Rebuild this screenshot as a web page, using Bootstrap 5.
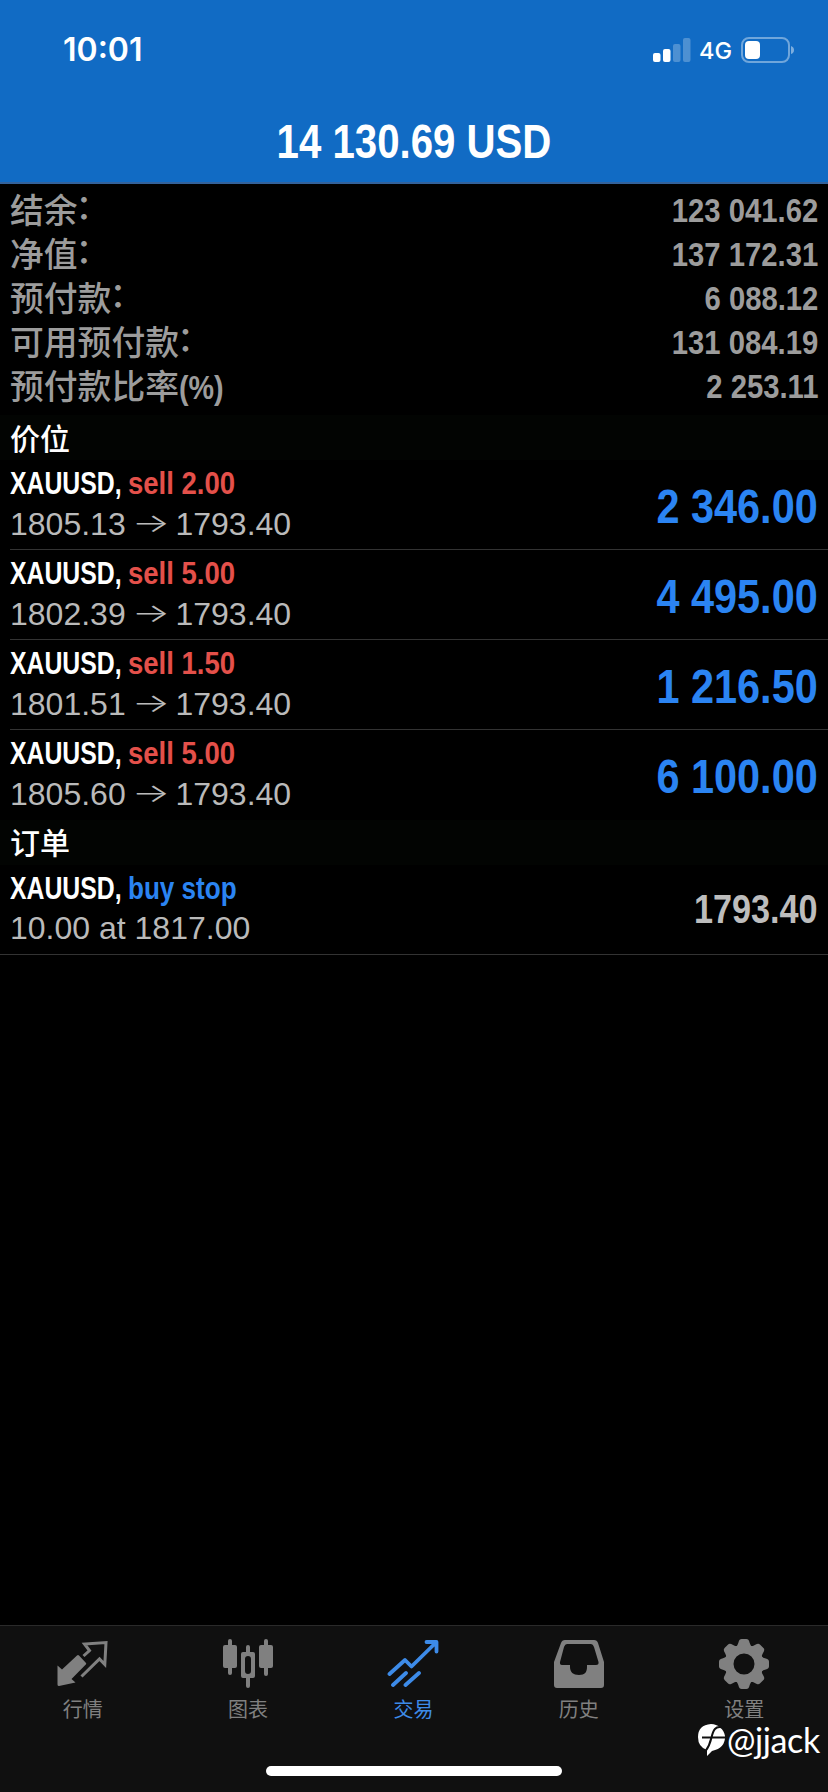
<!DOCTYPE html>
<html lang="zh-CN">
<head>
<meta charset="utf-8">
<meta name="viewport" content="width=device-width, initial-scale=1">
<title>14 130.69 USD</title>
<link rel="stylesheet" href="https://cdn.jsdelivr.net/npm/bootstrap@5.3.0/dist/css/bootstrap.min.css">
<style>
  body { background: #000; color: #fff; font-family: "Liberation Sans", "Noto Sans CJK SC", sans-serif; }
  .phone { height: 1792px; overflow: hidden; }
  /* condensed bold face: regular-width bold, squeezed horizontally */
  .narrow { display: inline-block; font-family: "Liberation Sans", sans-serif; font-weight: 700; white-space: nowrap; transform: scaleX(var(--sx, .85)); transform-origin: right center; }
  .narrow.from-start { transform-origin: left center; }
  .top-area { height: 184px; background: #116bc4; border-bottom: 2px solid #33629b; }
  .status { height: 100px; padding: 0 33px 0 63px; }
  .clock { font: 600 32px/36px Inter, sans-serif; letter-spacing: 0; }
  .net { font: 500 23.500px/28px Inter, sans-serif; margin: 1px 9px 0 8px; }
  .total { --sx: .82; display: block; font-size: 49px; line-height: 82px; transform-origin: center; }
  .summary { height: 231px; padding: 4px 10px 0; color: #9c9c9c; }
  .sum-row { height: 44px; font-size: 34px; line-height: 44px; }
  .sum-key { font: 500 33.800px/44px "Noto Sans CJK SC", sans-serif; margin-top: -1px; }
  .colon { display: inline-block; height: 44px; line-height: 44px; vertical-align: top; margin: -4px 0 0 -2px; }
  .sum-val { --sx: .86; }
  .group-title { height: 45px; padding-left: 10px; background: #020402; font: 500 30px/44px "Noto Sans CJK SC", sans-serif; }
  .group-title.second { line-height: 42px; }
  .deal { height: 90px; margin-left: 10px; padding: 2px 10px 0 0; border-bottom: 1px solid #333; }
  .deal.full { margin-left: 0; padding-left: 10px; }
  .deal-name { height: 41px; font-size: 32px; line-height: 42px; }
  .deal-name .narrow { vertical-align: top; }
  .symbol { --sx: .775; width: 118px; }
  .deal-line { font-size: 32px; line-height: 42px; color: #bababa; white-space: nowrap; }
  .full .deal-line { line-height: 41px; }
  .arrow { display: inline-flex; width: 32px; height: 30px; line-height: 30px; vertical-align: top; margin-top: 5px; justify-content: center; font-family: Inter, sans-serif; font-weight: 300; font-size: 26px; transform: scaleX(1.55); }
  .sell { --sx: .86; color: #e4504a; }
  .buy { --sx: .815; color: #2b84f2; }
  .profit { --sx: .846; font-size: 49px; line-height: 50px; color: #2b84f2; margin-top: 19px; }
  .quote { --sx: .855; font-size: 40px; line-height: 46px; color: #bdbdbd; margin-top: 19px; }
  .tabs { height: 167px; background: #101010; border-top: 1px solid #2a2a2a; padding-right: 1px; }
  .tab { width: 20%; padding-top: 12px; color: #808080; font: 400 20px/28px "Noto Sans CJK SC", sans-serif; }
  .tab svg { width: 52px; height: 52px; margin-bottom: 5px; }
  .tab.on { color: #3d8be8; }
  .home-bar { width: 296px; height: 10px; bottom: 16px; left: 266px; background: #fff; border-radius: 5px; }
  .stamp { left: 697px; bottom: 32px; font: 400 34px/40px Lato, sans-serif; letter-spacing: -.4px; }
</style>
</head>
<body>
<div class="phone d-flex flex-column position-relative">
  <header class="top-area flex-shrink-0">
    <div class="status d-flex justify-content-between align-items-center">
      <span class="clock">10:01</span>
      <div class="d-flex align-items-center">
        <svg width="38" height="24" viewBox="0 0 38 24" fill="#fff"><rect y="15" width="7.500" height="9" rx="2"/><rect x="10" y="11" width="7.500" height="13" rx="2"/><g opacity=".25"><rect x="20" y="6" width="7.500" height="18" rx="2"/><rect x="30" y="0" width="7.500" height="24" rx="2"/></g></svg>
        <span class="net">4G</span>
        <svg width="54" height="26" viewBox="0 0 54 26"><rect x="1" y="1" width="47" height="24" rx="7" fill="none" stroke="#fff" stroke-opacity=".4" stroke-width="2"/><rect x="4" y="4" width="15" height="18" rx="4" fill="#fff"/><path d="M50 9q3 1 3 4t-3 4z" fill="#fff" fill-opacity=".45"/></svg>
      </div>
    </div>
    <div class="total narrow text-center">14 130.69 USD</div>
  </header>

  <main class="flex-grow-1">
    <section class="summary">
      <div class="sum-row d-flex justify-content-between"><span class="sum-key">结余<span class="colon">：</span></span><span class="sum-val narrow">123 041.62</span></div>
      <div class="sum-row d-flex justify-content-between"><span class="sum-key">净值<span class="colon">：</span></span><span class="sum-val narrow">137 172.31</span></div>
      <div class="sum-row d-flex justify-content-between"><span class="sum-key">预付款<span class="colon">：</span></span><span class="sum-val narrow">6 088.12</span></div>
      <div class="sum-row d-flex justify-content-between"><span class="sum-key">可用预付款<span class="colon">：</span></span><span class="sum-val narrow">131 084.19</span></div>
      <div class="sum-row d-flex justify-content-between"><span class="sum-key">预付款比率<span class="narrow from-start">(%)</span></span><span class="sum-val narrow">2 253.11</span></div>
    </section>

    <div class="group-title">价位</div>
    <div class="deal d-flex justify-content-between align-items-start">
      <div><div class="deal-name"><span class="symbol narrow from-start">XAUUSD,</span><span class="sell narrow from-start">sell 2.00</span></div><div class="deal-line">1805.13 <span class="arrow">→</span> 1793.40</div></div>
      <div class="profit narrow">2 346.00</div>
    </div>
    <div class="deal d-flex justify-content-between align-items-start">
      <div><div class="deal-name"><span class="symbol narrow from-start">XAUUSD,</span><span class="sell narrow from-start">sell 5.00</span></div><div class="deal-line">1802.39 <span class="arrow">→</span> 1793.40</div></div>
      <div class="profit narrow">4 495.00</div>
    </div>
    <div class="deal d-flex justify-content-between align-items-start">
      <div><div class="deal-name"><span class="symbol narrow from-start">XAUUSD,</span><span class="sell narrow from-start">sell 1.50</span></div><div class="deal-line">1801.51 <span class="arrow">→</span> 1793.40</div></div>
      <div class="profit narrow">1 216.50</div>
    </div>
    <div class="deal border-bottom-0 d-flex justify-content-between align-items-start">
      <div><div class="deal-name"><span class="symbol narrow from-start">XAUUSD,</span><span class="sell narrow from-start">sell 5.00</span></div><div class="deal-line">1805.60 <span class="arrow">→</span> 1793.40</div></div>
      <div class="profit narrow">6 100.00</div>
    </div>

    <div class="group-title second">订单</div>
    <div class="deal full d-flex justify-content-between align-items-start">
      <div><div class="deal-name"><span class="symbol narrow from-start">XAUUSD,</span><span class="buy narrow from-start">buy stop</span></div><div class="deal-line">10.00 at 1817.00</div></div>
      <div class="quote narrow">1793.40</div>
    </div>
  </main>

  <nav class="tabs d-flex flex-shrink-0 text-center">
    <div class="tab d-flex flex-column align-items-center">
      <svg viewBox="0 0 52 52"><path d="M.5 27.500 5 31.500 20 17.500q1-1 2 0l7 7.500q.6.8-.2 1.600L14.500 41l4 3.500L2 48Q.5 48 .5 46.500z" fill="currentColor"/><path d="M26.500 18 32.500 12.500 27.500 6 49 4.500 47.800 26.500 42.500 21 24.500 38.500" fill="none" stroke="currentColor" stroke-width="3"/></svg>
      行情
    </div>
    <div class="tab d-flex flex-column align-items-center">
      <svg viewBox="0 0 52 52" fill="currentColor"><rect x="6" y="1" width="4" height="36" rx="2"/><rect x="1" y="7" width="14" height="23" rx="2"/><rect x="42" y="1" width="4" height="37" rx="2"/><rect x="37" y="7" width="14" height="23" rx="2"/><path fill-rule="evenodd" d="M24 9a2 2 0 0 1 4 0v5h3a2 2 0 0 1 2 2v22a2 2 0 0 1-2 2h-3v8a2 2 0 0 1-4 0v-8h-3a2 2 0 0 1-2-2V16a2 2 0 0 1 2-2h3zM26 18q-3 0-3 3v12q0 3 3 3t3-3V21q0-3-3-3z"/></svg>
      图表
    </div>
    <div class="tab on d-flex flex-column align-items-center">
      <svg viewBox="0 0 52 52" fill="none" stroke="currentColor" stroke-width="3.800" stroke-linecap="round" stroke-linejoin="round"><path d="M2.500 36 18 22 24.500 28.500 49 4.500M39.500 4H49.500V13.500M6 47 19 35M18.500 47 32 35"/></svg>
      交易
    </div>
    <div class="tab d-flex flex-column align-items-center">
      <svg viewBox="0 0 52 52"><path fill="currentColor" fill-rule="evenodd" d="M12 2h29q3 0 4 3l6 19v23q0 3-3 3H4q-3 0-3-3V24L8 5q1-3 4-3zM14 6q-2 0-3 3L7 24q-.5 3 2 3h8v2c0 5 3 8 9 8s8-3 8-8v-2h9q3 0 2.500-3L41 9q-1-3-3-3z"/></svg>
      历史
    </div>
    <div class="tab d-flex flex-column align-items-center">
      <svg viewBox="0 0 52 52" fill="currentColor">
        <defs><path id="tooth" d="M17 9.500Q19.500 8.500 20.300 5L21 2.800Q21.600 1 23.500 1H28.500Q30.400 1 31 2.800L31.700 5Q32.500 8.500 35 9.500L33 13H19z"/></defs>
        <circle cx="26" cy="26" r="15" fill="none" stroke="currentColor" stroke-width="9"/>
        <use href="#tooth"/><use href="#tooth" transform="rotate(45 26 26)"/><use href="#tooth" transform="rotate(90 26 26)"/><use href="#tooth" transform="rotate(135 26 26)"/><use href="#tooth" transform="rotate(180 26 26)"/><use href="#tooth" transform="rotate(225 26 26)"/><use href="#tooth" transform="rotate(270 26 26)"/><use href="#tooth" transform="rotate(315 26 26)"/>
      </svg>
      设置
    </div>
  </nav>
  <div class="home-bar position-absolute"></div>
  <div class="stamp position-absolute d-flex align-items-center">
    <svg width="30" height="34" viewBox="0 0 30 34"><path fill="#fff" d="M14 1C21 1 27 6 28 13q.5 12-13 15L10 33V27Q1 24 1 14 1 2 14 1z"/><path d="M5 14.500H28M27 5C18 1.500 16 8 14.500 14.500S11 25 8 29" fill="none" stroke="#101010" stroke-width="2"/></svg>
    <span>@jjack</span>
  </div>
</div>
<script src="https://cdn.jsdelivr.net/npm/bootstrap@5.3.0/dist/js/bootstrap.bundle.min.js"></script>
</body>
</html>
